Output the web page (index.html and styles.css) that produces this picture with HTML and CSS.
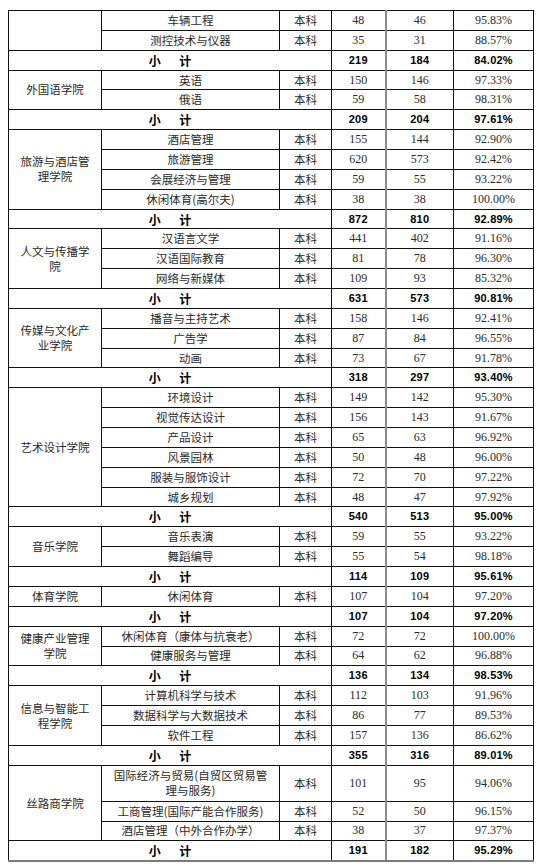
FILE: index.html
```html
<!DOCTYPE html>
<html lang="zh-CN">
<head>
<meta charset="utf-8">
<title>就业率统计</title>
<link rel="stylesheet" href="styles.css">
</head>
<body>
<table class="stats">
  <colgroup>
    <col class="c-college"><col class="c-major"><col class="c-level"><col class="c-n1"><col class="c-n2"><col class="c-rate">
  </colgroup>
  <tbody>
    <tr><td class="college" rowspan="2"></td><td class="major">车辆工程</td><td class="level">本科</td><td class="num">48</td><td class="num n2">46</td><td class="num">95.83%</td></tr>
    <tr><td class="major">测控技术与仪器</td><td class="level">本科</td><td class="num">35</td><td class="num n2">31</td><td class="num">88.57%</td></tr>
    <tr class="sub"><td class="label" colspan="3">小 计</td><td class="tot">219</td><td class="tot n2">184</td><td class="tot">84.02%</td></tr>

    <tr><td class="college" rowspan="2">外国语学院</td><td class="major">英语</td><td class="level">本科</td><td class="num">150</td><td class="num n2">146</td><td class="num">97.33%</td></tr>
    <tr><td class="major">俄语</td><td class="level">本科</td><td class="num">59</td><td class="num n2">58</td><td class="num">98.31%</td></tr>
    <tr class="sub"><td class="label" colspan="3">小 计</td><td class="tot">209</td><td class="tot n2">204</td><td class="tot">97.61%</td></tr>

    <tr><td class="college" rowspan="4">旅游与酒店管理学院</td><td class="major">酒店管理</td><td class="level">本科</td><td class="num">155</td><td class="num n2">144</td><td class="num">92.90%</td></tr>
    <tr><td class="major">旅游管理</td><td class="level">本科</td><td class="num">620</td><td class="num n2">573</td><td class="num">92.42%</td></tr>
    <tr><td class="major">会展经济与管理</td><td class="level">本科</td><td class="num">59</td><td class="num n2">55</td><td class="num">93.22%</td></tr>
    <tr><td class="major">休闲体育(高尔夫)</td><td class="level">本科</td><td class="num">38</td><td class="num n2">38</td><td class="num">100.00%</td></tr>
    <tr class="sub"><td class="label" colspan="3">小 计</td><td class="tot">872</td><td class="tot n2">810</td><td class="tot">92.89%</td></tr>

    <tr><td class="college" rowspan="3">人文与传播学院</td><td class="major">汉语言文学</td><td class="level">本科</td><td class="num">441</td><td class="num n2">402</td><td class="num">91.16%</td></tr>
    <tr><td class="major">汉语国际教育</td><td class="level">本科</td><td class="num">81</td><td class="num n2">78</td><td class="num">96.30%</td></tr>
    <tr><td class="major">网络与新媒体</td><td class="level">本科</td><td class="num">109</td><td class="num n2">93</td><td class="num">85.32%</td></tr>
    <tr class="sub"><td class="label" colspan="3">小 计</td><td class="tot">631</td><td class="tot n2">573</td><td class="tot">90.81%</td></tr>

    <tr><td class="college" rowspan="3">传媒与文化产业学院</td><td class="major">播音与主持艺术</td><td class="level">本科</td><td class="num">158</td><td class="num n2">146</td><td class="num">92.41%</td></tr>
    <tr><td class="major">广告学</td><td class="level">本科</td><td class="num">87</td><td class="num n2">84</td><td class="num">96.55%</td></tr>
    <tr><td class="major">动画</td><td class="level">本科</td><td class="num">73</td><td class="num n2">67</td><td class="num">91.78%</td></tr>
    <tr class="sub"><td class="label" colspan="3">小 计</td><td class="tot">318</td><td class="tot n2">297</td><td class="tot">93.40%</td></tr>

    <tr><td class="college" rowspan="6">艺术设计学院</td><td class="major">环境设计</td><td class="level">本科</td><td class="num">149</td><td class="num n2">142</td><td class="num">95.30%</td></tr>
    <tr><td class="major">视觉传达设计</td><td class="level">本科</td><td class="num">156</td><td class="num n2">143</td><td class="num">91.67%</td></tr>
    <tr><td class="major">产品设计</td><td class="level">本科</td><td class="num">65</td><td class="num n2">63</td><td class="num">96.92%</td></tr>
    <tr><td class="major">风景园林</td><td class="level">本科</td><td class="num">50</td><td class="num n2">48</td><td class="num">96.00%</td></tr>
    <tr><td class="major">服装与服饰设计</td><td class="level">本科</td><td class="num">72</td><td class="num n2">70</td><td class="num">97.22%</td></tr>
    <tr><td class="major">城乡规划</td><td class="level">本科</td><td class="num">48</td><td class="num n2">47</td><td class="num">97.92%</td></tr>
    <tr class="sub"><td class="label" colspan="3">小 计</td><td class="tot">540</td><td class="tot n2">513</td><td class="tot">95.00%</td></tr>

    <tr><td class="college" rowspan="2">音乐学院</td><td class="major">音乐表演</td><td class="level">本科</td><td class="num">59</td><td class="num n2">55</td><td class="num">93.22%</td></tr>
    <tr><td class="major">舞蹈编导</td><td class="level">本科</td><td class="num">55</td><td class="num n2">54</td><td class="num">98.18%</td></tr>
    <tr class="sub"><td class="label" colspan="3">小 计</td><td class="tot">114</td><td class="tot n2">109</td><td class="tot">95.61%</td></tr>

    <tr><td class="college">体育学院</td><td class="major">休闲体育</td><td class="level">本科</td><td class="num">107</td><td class="num n2">104</td><td class="num">97.20%</td></tr>
    <tr class="sub"><td class="label" colspan="3">小 计</td><td class="tot">107</td><td class="tot n2">104</td><td class="tot">97.20%</td></tr>

    <tr><td class="college" rowspan="2">健康产业管理学院</td><td class="major">休闲体育（康体与抗衰老）</td><td class="level">本科</td><td class="num">72</td><td class="num n2">72</td><td class="num">100.00%</td></tr>
    <tr><td class="major">健康服务与管理</td><td class="level">本科</td><td class="num">64</td><td class="num n2">62</td><td class="num">96.88%</td></tr>
    <tr class="sub"><td class="label" colspan="3">小 计</td><td class="tot">136</td><td class="tot n2">134</td><td class="tot">98.53%</td></tr>

    <tr><td class="college" rowspan="3">信息与智能工程学院</td><td class="major">计算机科学与技术</td><td class="level">本科</td><td class="num">112</td><td class="num n2">103</td><td class="num">91.96%</td></tr>
    <tr><td class="major">数据科学与大数据技术</td><td class="level">本科</td><td class="num">86</td><td class="num n2">77</td><td class="num">89.53%</td></tr>
    <tr><td class="major">软件工程</td><td class="level">本科</td><td class="num">157</td><td class="num n2">136</td><td class="num">86.62%</td></tr>
    <tr class="sub"><td class="label" colspan="3">小 计</td><td class="tot">355</td><td class="tot n2">316</td><td class="tot">89.01%</td></tr>

    <tr class="tall"><td class="college" rowspan="3">丝路商学院</td><td class="major">国际经济与贸易(自贸区贸易管理与服务)</td><td class="level">本科</td><td class="num">101</td><td class="num n2">95</td><td class="num">94.06%</td></tr>
    <tr><td class="major">工商管理(国际产能合作服务)</td><td class="level">本科</td><td class="num">52</td><td class="num n2">50</td><td class="num">96.15%</td></tr>
    <tr><td class="major">酒店管理（中外合作办学）</td><td class="level">本科</td><td class="num">38</td><td class="num n2">37</td><td class="num">97.37%</td></tr>
    <tr class="sub last"><td class="label" colspan="3">小 计</td><td class="tot">191</td><td class="tot n2">182</td><td class="tot">95.29%</td></tr>
  </tbody>
</table>
</body>
</html>
```

FILE: styles.css
```css
html, body {
  margin: 0;
  padding: 0;
  background: #ffffff;
}

body {
  padding: 10px 0 0 8px;
  font-family: "Noto Sans CJK SC", "Noto Sans", sans-serif;
  color: #2a2a2a;
}

.stats {
  border-collapse: collapse;
  table-layout: fixed;
  width: 525px;
  font-size: 11.5px;
}

.c-college { width: 93px; }
.c-major { width: 178px; }
.c-level { width: 52px; }
.c-n1 { width: 54px; }
.c-n2 { width: 68px; }
.c-rate { width: 80px; }

.stats td {
  border: 1px solid #111;
  height: 18.86px;
  padding: 0 8px;
  text-align: center;
  vertical-align: middle;
  line-height: 15px;
  white-space: normal;
}

.stats tr.tall td {
  height: 35px;
}

.stats td.n2 {
  border-left: 2px solid #8c8c8c;
}

.college,
.major,
.level {
  font-weight: 400;
}

.num {
  font-family: "Liberation Serif", "Noto Sans CJK SC", serif;
  font-size: 12px;
  color: #2c2c2c;
}

.sub td {
  color: #000;
}

.label {
  font-weight: 700;
  word-spacing: 16px;
  font-size: 12px;
}

.tot {
  font-family: "Liberation Sans", "Noto Sans", sans-serif;
  font-weight: 700;
  font-size: 11px;
  letter-spacing: 0.2px;
}

.stats tr.last td {
  border-bottom: 2px solid #7a7a7a;
}
```
